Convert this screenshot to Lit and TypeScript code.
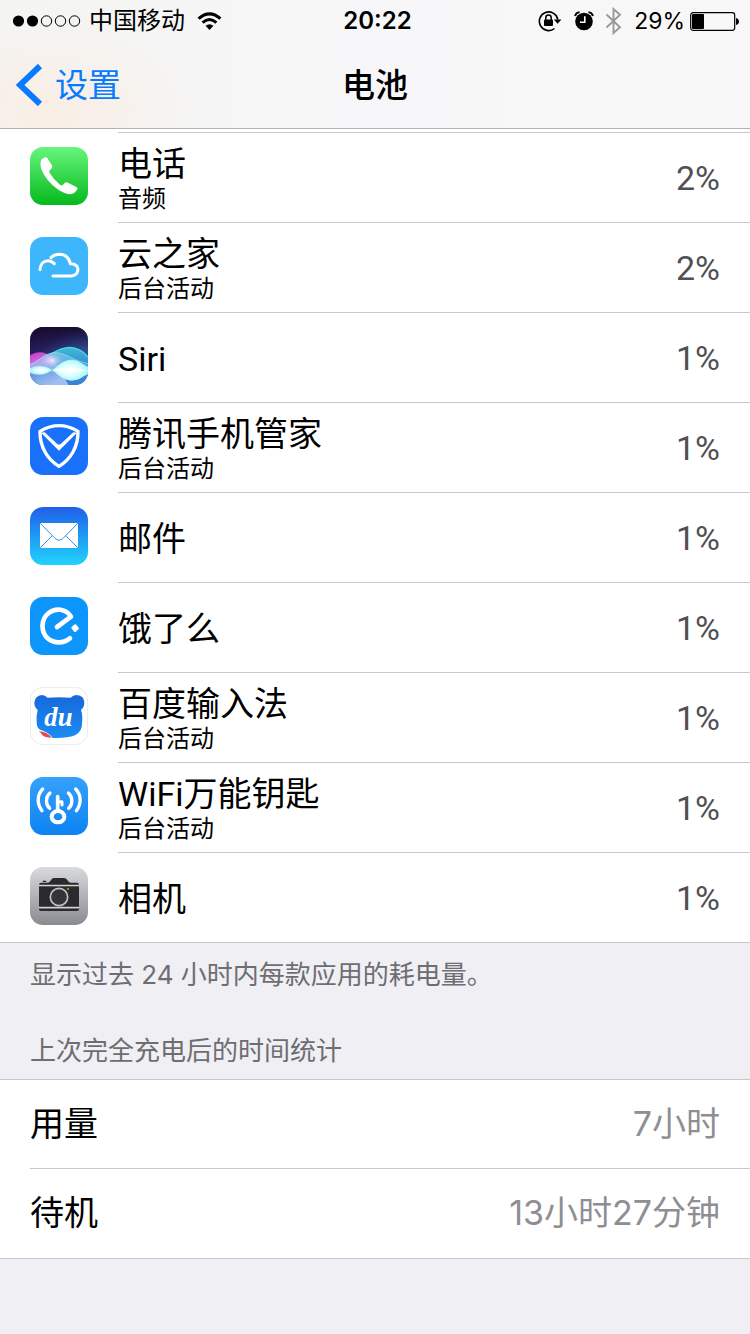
import { LitElement, html, css, nothing, TemplateResult } from "lit";
import { customElement, property } from "lit/decorators.js";

interface AppUsage {
  name: string;
  detail?: string;
  percent: string;
  icon: TemplateResult;
}

const phoneIcon = html`<svg viewBox="30 36 174 174" aria-hidden="true">
  <defs>
    <linearGradient id="phone" x1="0" y1="0" x2="0" y2="1">
      <stop offset="0" stop-color="#67f57c" />
      <stop offset="1" stop-color="#05b91d" />
    </linearGradient>
  </defs>
  <rect x="30" y="36" width="174" height="174" rx="39" fill="url(#phone)" />
  <path
    fill="#fff"
    d="M65 73Q73 65 79 67Q82 68 85 74L96 91Q99 97 94 101L89 106Q87 109 89 114Q101 134 120 149Q125 152 129 149L134 144Q138 140 144 143L169 156Q175 159 172 163Q165 175 154 177Q137 180 113 163Q78 138 64 103Q58 83 65 73Z"
  />
</svg>`;

const cloudIcon = html`<svg viewBox="30 306 174 174" aria-hidden="true">
  <rect x="30" y="306" width="174" height="174" rx="39" fill="#3eb6fc" />
  <g fill="none" stroke="#fff" stroke-width="9" stroke-linecap="round" stroke-linejoin="round">
    <path d="M60 404C61 386 71 377 84 377Q94 377 103 386" />
    <path d="M93 368Q103 358 119 358Q145 359 151 386Q174 386 174 404Q172 422 154 423H99" />
  </g>
</svg>`;

const siriIcon = html`<svg viewBox="30 36 174 174" aria-hidden="true">
  <defs>
    <linearGradient id="siri-sky" x1="0" y1="0" x2="1" y2="1">
      <stop offset="0" stop-color="#21104a" />
      <stop offset="0.3" stop-color="#27205f" />
      <stop offset="0.5" stop-color="#2b3f86" />
      <stop offset="1" stop-color="#2f62b0" />
    </linearGradient>
    <linearGradient id="siri-night" x1="0" y1="0" x2="0" y2="1">
      <stop offset="0" stop-color="#180c30" />
      <stop offset="1" stop-color="#180c30" stop-opacity="0" />
    </linearGradient>
    <linearGradient id="siri-pink" x1="0" y1="0" x2="0.5" y2="1">
      <stop offset="0" stop-color="#dd2fc9" />
      <stop offset="0.35" stop-color="#cf7fe8" />
      <stop offset="0.6" stop-color="#6fa2e6" />
      <stop offset="1" stop-color="#a9c2f3" />
    </linearGradient>
    <linearGradient id="siri-teal" x1="0" y1="0" x2="0" y2="1">
      <stop offset="0" stop-color="#3fc9dc" />
      <stop offset="0.4" stop-color="#3a9ada" />
      <stop offset="1" stop-color="#3f83d8" />
    </linearGradient>
    <radialGradient id="siri-glow">
      <stop offset="0" stop-color="#fff" />
      <stop offset="0.5" stop-color="#e0feff" />
      <stop offset="1" stop-color="#a9f6fa" />
    </radialGradient>
    <radialGradient id="siri-haze">
      <stop offset="0" stop-color="#fff" stop-opacity="0.8" />
      <stop offset="1" stop-color="#d9a8ff" stop-opacity="0" />
    </radialGradient>
    <clipPath id="siri-clip"><rect x="30" y="36" width="174" height="174" rx="39" /></clipPath>
  </defs>
  <g clip-path="url(#siri-clip)">
    <rect x="30" y="36" width="174" height="174" fill="url(#siri-sky)" />
    <rect x="30" y="36" width="174" height="70" fill="url(#siri-night)" />
    <path d="M50 150C90 120 112 97 149 97C178 98 193 112 204 126V210H50Z" fill="url(#siri-teal)" opacity="0.9" />
    <path d="M30 121C52 107 74 109 90 123C110 142 128 180 146 210H30Z" fill="url(#siri-pink)" opacity="0.92" />
    <path d="M30 148C58 136 76 114 106 113C140 114 160 140 204 150V176C150 170 80 170 30 170Z" fill="#a8e0f6" opacity="0.4" />
    <path d="M64 130C94 121 114 97 149 97C178 98 193 112 204 126" fill="none" stroke="#4fe0e2" stroke-width="4" opacity="0.85" />
    <path d="M30 149C60 138 76 113 106 113C140 114 160 138 204 146" fill="none" stroke="#9af0f4" stroke-width="3" opacity="0.7" />
    <ellipse cx="96" cy="136" rx="36" ry="24" fill="url(#siri-haze)" />
    <path d="M30 160C53 149 75 152 96 165C77 182 50 182 30 173Z" fill="url(#siri-glow)" />
    <path d="M96 165C114 155 126 134 154 134C178 134 190 150 204 156V178C190 182 179 197 156 197C128 197 112 176 96 165Z" fill="url(#siri-glow)" />
    <path d="M96 165C128 154 165 158 204 166C169 172 128 176 96 165Z" fill="#fff" opacity="0.7" />
  </g>
</svg>`;

const shieldIcon = html`<svg viewBox="30 306 174 174" aria-hidden="true">
  <rect x="30" y="306" width="174" height="174" rx="39" fill="#1870fb" />
  <path
    d="M117 332C137 332 157 339 174 349C175 394 153 432 117 454C81 432 59 394 60 349C77 339 97 332 117 332Z"
    fill="none" stroke="#fff" stroke-width="10" stroke-linejoin="round"
  />
  <path d="M63 353L117 407L171 353L160 352L123 386Q117 391 111 386L74 352Z" fill="#fff" />
</svg>`;

const mailIcon = html`<svg viewBox="30 36 174 174" aria-hidden="true">
  <defs>
    <linearGradient id="mail" x1="0" y1="0" x2="0" y2="1">
      <stop offset="0" stop-color="#205fe9" />
      <stop offset="1" stop-color="#20d3fd" />
    </linearGradient>
  </defs>
  <rect x="30" y="36" width="174" height="174" rx="39" fill="url(#mail)" />
  <rect x="60" y="84" width="114" height="75" rx="3" fill="#fff" />
  <path
    d="M61 85L105 130Q117 141 129 130L173 85M61 158L97 122M173 158L137 122"
    fill="none" stroke="#3a91e9" stroke-width="3"
  />
</svg>`;

const elemeIcon = html`<svg viewBox="30 306 174 174" aria-hidden="true">
  <rect x="30" y="306" width="174" height="174" rx="39" fill="#0c95fb" />
  <path
    d="M111 396L153 365C138 340 106 338 86 354C61 373 63 411 82 429C102 447 132 446 150 430"
    fill="none" stroke="#fff" stroke-width="14" stroke-linecap="round" stroke-linejoin="round"
  />
  <rect x="156" y="390" width="18" height="19" rx="4" fill="#fff" transform="rotate(-38 165 399)" />
</svg>`;

const baiduIcon = html`<svg viewBox="30 36 174 174" aria-hidden="true">
  <defs>
    <linearGradient id="bear" x1="0" y1="0" x2="0" y2="1">
      <stop offset="0" stop-color="#1768dc" />
      <stop offset="1" stop-color="#1a8df2" />
    </linearGradient>
  </defs>
  <rect x="31" y="37" width="172" height="172" rx="38" fill="#fff" stroke="#dedee3" stroke-width="2" />
  <g fill="url(#bear)">
    <path d="M66 60Q76 60 82 68Q117 65 152 68Q158 60 170 60Q193 63 193 82Q193 98 183 105Q189 121 186 145Q187 170 165 181Q139 191 98 189Q88 172 60 164Q51 159 50 144Q48 123 53 105Q43 97 43 82Q45 63 66 60Z" />
  </g>
  <path d="M56 169Q82 170 95 188Q73 188 66 179Q63 173 56 169Z" fill="#e34a55" />
  <text x="73" y="153" class="du">du</text>
</svg>`;

const wifiKeyIcon = html`<svg viewBox="30 306 174 174" aria-hidden="true">
  <defs>
    <linearGradient id="wifi-key" x1="0" y1="0" x2="0" y2="1">
      <stop offset="0" stop-color="#37a1fc" />
      <stop offset="1" stop-color="#0c83f2" />
    </linearGradient>
  </defs>
  <rect x="30" y="306" width="174" height="174" rx="39" fill="url(#wifi-key)" />
  <g fill="none" stroke="#fff" stroke-linecap="round" stroke-linejoin="round">
    <path
      stroke-width="10"
      d="M68 342C50 360 51 388 66 407M90 354C76 366 76 388 89 400M145 354C159 366 159 388 146 400M167 342C185 360 184 388 169 407"
    />
    <path d="M113 365V405" stroke-width="11" />
    <path d="M115 380H126V390" stroke-width="9" />
    <ellipse cx="114" cy="425" rx="19" ry="17" stroke-width="12" />
  </g>
</svg>`;

const cameraIcon = html`<svg viewBox="30 36 174 174" aria-hidden="true">
  <defs>
    <linearGradient id="camera" x1="0" y1="0" x2="0" y2="1">
      <stop offset="0" stop-color="#d9dadc" />
      <stop offset="1" stop-color="#898b91" />
    </linearGradient>
  </defs>
  <rect x="30" y="36" width="174" height="174" rx="39" fill="url(#camera)" />
  <path d="M57 89Q57 83 64 83H83Q89 83 93 75Q96 69 102 69H132Q138 69 142 75Q146 83 152 83H170Q177 83 177 89Z" fill="#2b2b2d" />
  <rect x="68" y="77" width="11" height="4" rx="2" fill="#1e1e20" />
  <rect x="57" y="94" width="120" height="61" fill="#2b2b2d" />
  <rect x="57" y="90" width="120" height="3" fill="#d4d5d7" />
  <path d="M57 160H177V163Q177 168 171 168H63Q57 168 57 163Z" fill="#2b2b2d" />
  <rect x="57" y="156" width="120" height="4" fill="#d4d5d7" />
  <circle cx="117" cy="126" r="26" fill="#343436" stroke="#c1c2c5" stroke-width="5" />
  <circle cx="144" cy="102" r="3" fill="#cfa53c" />
</svg>`;

const apps: AppUsage[] = [
  { name: "电话", detail: "音频", percent: "2%", icon: phoneIcon },
  { name: "云之家", detail: "后台活动", percent: "2%", icon: cloudIcon },
  { name: "Siri", percent: "1%", icon: siriIcon },
  { name: "腾讯手机管家", detail: "后台活动", percent: "1%", icon: shieldIcon },
  { name: "邮件", percent: "1%", icon: mailIcon },
  { name: "饿了么", percent: "1%", icon: elemeIcon },
  { name: "百度输入法", detail: "后台活动", percent: "1%", icon: baiduIcon },
  { name: "WiFi万能钥匙", detail: "后台活动", percent: "1%", icon: wifiKeyIcon },
  { name: "相机", percent: "1%", icon: cameraIcon },
];

const stats = [
  { label: "用量", value: "7小时" },
  { label: "待机", value: "13小时27分钟" },
];

@customElement("status-bar")
export class StatusBar extends LitElement {
  static styles = css`
    :host {
      box-sizing: border-box;
      display: grid;
      grid-template-columns: 1fr auto 1fr;
      align-items: center;
      height: 40px;
      padding: 2px 11px 0 12px;
      font-size: 24px;
      line-height: 38px;
    }
    svg {
      display: block;
      flex: none;
    }
    .side {
      display: flex;
      align-items: center;
    }
    .carrier {
      margin: 0 12px 0 8px;
    }
    .time {
      padding-left: 4px;
      font-weight: 600;
    }
    .end {
      justify-content: flex-end;
    }
    .rotation {
      margin-right: 12px;
    }
    .alarm {
      margin-right: 11px;
    }
    .bluetooth {
      margin-right: 12px;
    }
    .level {
      margin-right: 5px;
      font-size: 23px;
    }
  `;

  render() {
    return html`
      <div class="side">
        <svg width="69" height="12" viewBox="0 0 69 12" aria-label="信号">
          <circle cx="6.5" cy="6" r="5.6" />
          <circle cx="20.5" cy="6" r="5.6" />
          <g fill="none" stroke="#000" stroke-width="1">
            <circle cx="34.5" cy="6" r="5.2" />
            <circle cx="48.5" cy="6" r="5.2" />
            <circle cx="62.5" cy="6" r="5.2" />
          </g>
        </svg>
        <span class="carrier">中国移动</span>
        <svg width="25" height="19" viewBox="0 0 25 19" aria-label="Wi-Fi">
          <g fill="none" stroke="#000" stroke-width="3">
            <path d="M1.6 6.7Q12.5 -3 23.4 6.7" />
            <path d="M5.6 10.7Q12.5 4.3 19.4 10.7" />
          </g>
          <path d="M8.5 13.8Q12.5 10.5 16.5 13.8L12.5 18Z" />
        </svg>
      </div>
      <span class="time">20:22</span>
      <div class="side end">
        <svg class="rotation" width="24" height="22" viewBox="0 0 24 22" aria-label="方向锁定">
          <path d="M16.5 18.5A9.3 9.3 0 1 1 19.8 9.5" fill="none" stroke="#000" stroke-width="1.6" />
          <path d="M15.8 9.5H23.4L19.6 13.8Z" />
          <rect x="6" y="9.5" width="9" height="6.5" rx="1" />
          <path d="M7.8 10V7.8A2.7 2.7 0 0 1 13.2 7.8V10" fill="none" stroke="#000" stroke-width="1.5" />
        </svg>
        <svg class="alarm" width="20" height="20" viewBox="0 0 20 20" aria-label="闹钟">
          <circle cx="10" cy="10.5" r="8.8" />
          <path d="M10.8 5.3V11.2H6" fill="none" stroke="#fff" stroke-width="1.6" />
          <path d="M1 5Q2 1.5 5.6 1.2M14.4 1.2Q18 1.5 19 5" fill="none" stroke="#000" stroke-width="1.8" />
        </svg>
        <svg class="bluetooth" width="17" height="28" viewBox="0 0 17 28" aria-label="蓝牙">
          <path d="M1.5 7.5L15 20.3L8.5 26V2L15 7.7L1.5 20.5" fill="none" stroke="#999" stroke-width="1.9" />
        </svg>
        <span class="level">29%</span>
        <svg width="49" height="19" viewBox="0 0 49 19" aria-label="电量">
          <rect x="0.7" y="0.7" width="44" height="17.6" rx="2.5" fill="none" stroke="#000" stroke-width="1.2" />
          <rect x="2" y="2" width="12" height="15" rx="1" />
          <path d="M46 6Q49 7 49 9.5Q49 12 46 13Z" />
        </svg>
      </div>
    `;
  }
}

@customElement("app-usage-row")
export class AppUsageRow extends LitElement {
  @property({ attribute: false }) app!: AppUsage;

  static styles = css`
    :host {
      display: flex;
      padding-left: 30px;
      font-family: Roboto, "Noto Sans CJK SC", sans-serif;
    }
    .icon {
      width: 58px;
      height: 58px;
      padding: 14px 0 18px;
      margin-right: 30px;
      flex: none;
    }
    .icon svg {
      display: block;
      width: 100%;
      height: 100%;
    }
    .du {
      font: italic bold 80px "Liberation Serif", serif;
      fill: #fff;
    }
    .body {
      flex: 1;
      display: flex;
      align-items: center;
      justify-content: space-between;
      padding-right: 30px;
      border-bottom: 1px solid var(--separator);
    }
    .label {
      padding-top: 2px;
    }
    .name {
      font-size: 34px;
      line-height: 40px;
    }
    .detail {
      font-size: 24px;
      line-height: 30px;
    }
    .percent {
      font-size: 34px;
      line-height: 40px;
      color: #505054;
    }
  `;

  render() {
    const { name, detail, percent, icon } = this.app;
    return html`
      <div class="icon">${icon}</div>
      <div class="body">
        <div class="label">
          <div class="name">${name}</div>
          ${detail ? html`<div class="detail">${detail}</div>` : nothing}
        </div>
        <div class="percent">${percent}</div>
      </div>
    `;
  }
}

@customElement("app-root")
export class AppRoot extends LitElement {
  static styles = css`
    :host {
      --separator: #c8c7cc;
      display: block;
      min-height: 100vh;
      background: #efeff4;
      color: #000;
      font-family: Inter, "Noto Sans CJK SC", sans-serif;
      font-weight: 400;
    }
    header {
      background:
        radial-gradient(ellipse 150px 90px at 50px 110px, #f9eee5, transparent),
        linear-gradient(90deg, #f4f4f2, #f7f7f9 50%, #f8f8f8);
      border-bottom: 1px solid #b2b2b4;
    }
    nav {
      box-sizing: border-box;
      display: grid;
      grid-template-columns: 1fr auto 1fr;
      align-items: center;
      height: 88px;
      padding: 2px 16px 0;
    }
    .back {
      justify-self: start;
      display: flex;
      align-items: center;
      gap: 12px;
      padding: 0;
      border: 0;
      background: none;
      color: #087aff;
      font: inherit;
      font-size: 33px;
      line-height: 48px;
      cursor: pointer;
    }
    .back svg {
      display: block;
    }
    h1 {
      margin: 0;
      font-size: 33px;
      line-height: 48px;
      font-weight: 500;
    }
    .apps {
      margin: 0;
      padding: 3px 0 0;
      list-style: none;
      background: #fff;
    }
    .apps::before {
      content: "";
      display: block;
      margin-left: 118px;
      border-top: 1px solid var(--separator);
    }
    .apps li:last-child {
      --separator: transparent;
    }
    .apps,
    .stats {
      border-bottom: 1px solid #c8c7cc;
    }
    .apps li:last-child app-usage-row {
      margin-bottom: -1px;
    }
    .note,
    h2 {
      margin: 0;
      padding: 0 30px;
      font-size: 26px;
      line-height: 36px;
      font-weight: 400;
      color: #6d6d72;
    }
    .note {
      padding-top: 14px;
    }
    h2 {
      padding-top: 40px;
      padding-bottom: 10px;
    }
    .stats {
      margin: 0;
      padding-bottom: 1px;
      background: #fff;
      border-top: 1px solid #c8c7cc;
    }
    .stat {
      display: flex;
      align-items: center;
      justify-content: space-between;
      height: 88px;
      margin-left: 30px;
      padding-right: 30px;
      font-size: 34px;
      line-height: 48px;
    }
    .stat + .stat {
      border-top: 1px solid #c8c7cc;
    }
    dd {
      margin: 0;
      color: #8e8e93;
    }
  `;

  render() {
    return html`
      <header>
        <status-bar></status-bar>
        <nav>
          <button class="back" type="button">
            <svg width="27" height="42" viewBox="0 0 27 42" aria-hidden="true">
              <path d="M24 2L4 21L24 40" fill="none" stroke="#087aff" stroke-width="6" />
            </svg>
            <span>设置</span>
          </button>
          <h1>电池</h1>
        </nav>
      </header>
      <main>
        <ul class="apps">
          ${apps.map((app) => html`<li><app-usage-row .app=${app}></app-usage-row></li>`)}
        </ul>
        <p class="note">显示过去 24 小时内每款应用的耗电量。</p>
        <h2>上次完全充电后的时间统计</h2>
        <dl class="stats">
          ${stats.map(
            (s) => html`<div class="stat"><dt>${s.label}</dt><dd>${s.value}</dd></div>`
          )}
        </dl>
      </main>
    `;
  }
}
